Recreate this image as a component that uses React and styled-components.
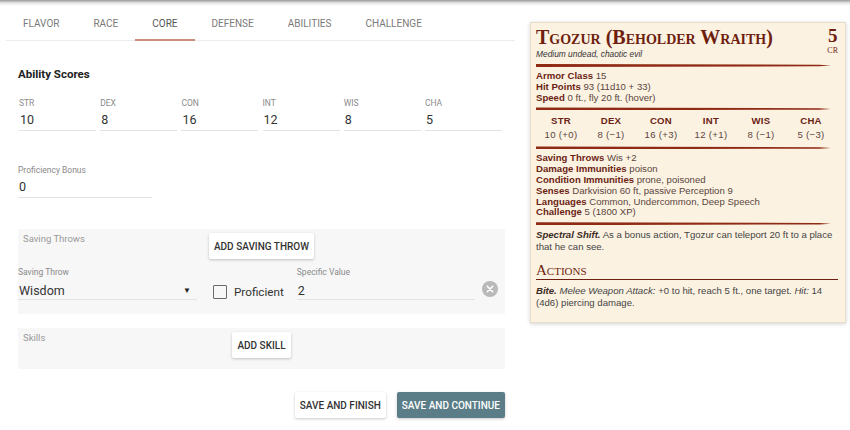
import React from 'react';
import styled, { createGlobalStyle } from 'styled-components';

const tabs = ['FLAVOR', 'RACE', 'CORE', 'DEFENSE', 'ABILITIES', 'CHALLENGE'];

const scores = [
    { name: 'STR', value: 10, mod: '+0' },
    { name: 'DEX', value: 8, mod: '−1' },
    { name: 'CON', value: 16, mod: '+3' },
    { name: 'INT', value: 12, mod: '+1' },
    { name: 'WIS', value: 8, mod: '−1' },
    { name: 'CHA', value: 5, mod: '−3' },
];

const App = () => {
    return (
        <>
            <GlobalStyle />
            <TopShade />
            <Page>
                <Editor>
                    <TabBar>
                        {tabs.map((t) => (
                            <Tab key={t} active={t === 'CORE'}>{t}</Tab>
                        ))}
                    </TabBar>
                    <Content>
                        <Heading>Ability Scores</Heading>
                        <ScoreGrid>
                            {scores.map((s) => (
                                <Field key={s.name}>
                                    <Label>{s.name}</Label>
                                    <Value>{s.value}</Value>
                                </Field>
                            ))}
                        </ScoreGrid>
                        <Field width="134px" top="34px">
                            <Label>Proficiency Bonus</Label>
                            <Value>0</Value>
                        </Field>

                        <GrayBox top="31px" height="85px">
                            <BoxHead>
                                <BoxLabel>Saving Throws</BoxLabel>
                                <Button>ADD SAVING THROW</Button>
                            </BoxHead>
                            <ThrowRow>
                                <Field width="179px">
                                    <Label>Saving Throw</Label>
                                    <Value tall>
                                        Wisdom
                                        <Arrow>▼</Arrow>
                                    </Value>
                                </Field>
                                <Check>
                                    <Box />
                                    Proficient
                                </Check>
                                <Field width="178px">
                                    <Label>Specific Value</Label>
                                    <Value tall>2</Value>
                                </Field>
                                <Clear>
                                    <svg width="16" height="16" viewBox="0 0 16 16">
                                        <circle cx="8" cy="8" r="8" fill="#b9b9b9" />
                                        <path d="M5.3 5.3 L10.7 10.7 M10.7 5.3 L5.3 10.7" stroke="#fff" strokeWidth="1.6" strokeLinecap="round" />
                                    </svg>
                                </Clear>
                            </ThrowRow>
                        </GrayBox>

                        <GrayBox top="14px" height="41px">
                            <BoxHead>
                                <BoxLabel>Skills</BoxLabel>
                                <Button>ADD SKILL</Button>
                            </BoxHead>
                        </GrayBox>

                        <Actions>
                            <Button>SAVE AND FINISH</Button>
                            <Button primary>SAVE AND CONTINUE</Button>
                        </Actions>
                    </Content>
                </Editor>

                <StatBlock>
                    <TitleRow>
                        <div>
                            <Title>Tgozur (Beholder Wraith)</Title>
                            <Subtitle>Medium undead, chaotic evil</Subtitle>
                        </div>
                        <Cr>
                            <CrNum>5</CrNum>
                            <CrLabel>CR</CrLabel>
                        </Cr>
                    </TitleRow>
                    <Rule />
                    <Props>
                        <p><b>Armor Class</b> 15</p>
                        <p><b>Hit Points</b> 93 (11d10 + 33)</p>
                        <p><b>Speed</b> 0 ft., fly 20 ft. (hover)</p>
                    </Props>
                    <Rule />
                    <AbilityTable>
                        {scores.map((s) => (
                            <AbilityCell key={s.name}>
                                <b>{s.name}</b>
                                <span>{s.value} ({s.mod})</span>
                            </AbilityCell>
                        ))}
                    </AbilityTable>
                    <Rule />
                    <Props>
                        <p><b>Saving Throws</b> Wis +2</p>
                        <p><b>Damage Immunities</b> poison</p>
                        <p><b>Condition Immunities</b> prone, poisoned</p>
                        <p><b>Senses</b> Darkvision 60 ft, passive Perception 9</p>
                        <p><b>Languages</b> Common, Undercommon, Deep Speech</p>
                        <p><b>Challenge</b> 5 (1800 XP)</p>
                    </Props>
                    <Rule />
                    <Trait>
                        <b><i>Spectral Shift.</i></b> As a bonus action, Tgozur can teleport 20 ft to a place
                        <br />
                        that he can see.
                    </Trait>
                    <SectionTitle>Actions</SectionTitle>
                    <Trait gap="5px">
                        <b><i>Bite.</i></b> <i>Melee Weapon Attack:</i> +0 to hit, reach 5 ft., one target. <i>Hit:</i> 14
                        <br />
                        (4d6) piercing damage.
                    </Trait>
                </StatBlock>
            </Page>
        </>
    );
};

export default App;


const GlobalStyle = createGlobalStyle`
    body {
        margin: 0;
        background: #fff;
        font-family: Roboto, "Liberation Sans", sans-serif;
        width: 850px;
        height: 430px;
        overflow: hidden;
    }
    p {
        margin: 0;
    }
`;
const TopShade = styled.div`
    height: 6px;
    background: linear-gradient(#9a9a9a, #e6e6e6 50%, #fff);
`;
const Page = styled.div`
    display: flex;
    align-items: flex-start;
`;
const Editor = styled.div`
    width: 509px;
    margin-left: 6px;
`;
const TabBar = styled.div`
    display: flex;
    height: 34px;
    border-bottom: 1px solid #ececec;
`;
const Tab = styled.div`
    padding: 0 17px;
    display: flex;
    align-items: center;
    padding-top: 1px;
    font-size: 10px;
    color: ${(p) => (p.active ? '#555' : '#7a7a7a')};
    border-bottom: 2px solid ${(p) => (p.active ? '#c98f77' : 'transparent')};
    margin-bottom: -1px;
`;
const Content = styled.div`
    padding: 0 10px 0 12px;
`;
const Heading = styled.div`
    margin-top: 26px;
    font-size: 11.5px;
    font-weight: 700;
    color: #222;
`;
const ScoreGrid = styled.div`
    display: grid;
    grid-template-columns: repeat(6, 77px);
    column-gap: 4.2px;
    margin-top: 17px;
    padding-left: 1px;
`;
const Field = styled.div`
    width: ${(p) => p.width || 'auto'};
    margin-top: ${(p) => p.top || '0'};
    border-bottom: 1px solid #e3e3e3;
`;
const Label = styled.div`
    font-size: 8.5px;
    color: #8a8a8a;
    line-height: 11px;
`;
const Value = styled.div`
    display: flex;
    align-items: center;
    justify-content: space-between;
    font-size: 12.5px;
    color: #333;
    height: 21px;
    padding: ${(p) => (p.tall ? '3px 0 0 1px' : '0 0 0 1px')};
    box-sizing: border-box;
`;
const Arrow = styled.span`
    font-size: 8px;
    color: #222;
    margin-right: 6px;
`;
const GrayBox = styled.div`
    margin-top: ${(p) => p.top};
    height: ${(p) => p.height};
    background: #f7f7f7;
`;
const BoxHead = styled.div`
    display: grid;
    grid-template-columns: 1fr auto 1fr;
    align-items: start;
    padding: 4px 5px 0;
`;
const BoxLabel = styled.div`
    font-size: 9.5px;
    color: #999;
`;
const Button = styled.button`
    grid-column: 2;
    height: 26px;
    padding: 0 5px;
    border: none;
    border-radius: 2px;
    font-family: Roboto, sans-serif;
    font-size: 10px;
    font-weight: 500;
    color: ${(p) => (p.primary ? '#fff' : '#333')};
    background: ${(p) => (p.primary ? '#5b7d87' : '#fff')};
    box-shadow: 0 1px 3px rgba(0, 0, 0, 0.22);
`;
const ThrowRow = styled.div`
    display: flex;
    align-items: flex-end;
    margin-top: 8px;
`;
const Check = styled.div`
    display: flex;
    align-items: center;
    gap: 7px;
    margin: 0 13px 0 16px;
    padding-bottom: 1px;
    font-size: 11.7px;
    color: #333;
`;
const Box = styled.div`
    box-sizing: border-box;
    width: 14px;
    height: 14px;
    border: 1.6px solid #6a6a6a;
    border-radius: 1px;
`;
const Clear = styled.div`
    display: flex;
    margin-left: 7px;
    padding-bottom: 3px;
`;
const Actions = styled.div`
    display: flex;
    justify-content: flex-end;
    gap: 11px;
    margin-top: 23px;
`;
const StatBlock = styled.div`
    width: 302px;
    margin: 16px 0 0 15px;
    padding: 3px 7px 13px 5px;
    background: #fcf2e2;
    border: 1px solid #e8dccb;
    box-shadow: 0 1px 4px rgba(0, 0, 0, 0.18);
    font-family: "Liberation Sans", Arial, sans-serif;
    color: #5a463e;
`;
const TitleRow = styled.div`
    display: flex;
    justify-content: space-between;
`;
const Title = styled.div`
    font-family: "Liberation Serif", serif;
    font-variant: small-caps;
    font-weight: 700;
    font-size: 20px;
    line-height: 22px;
    color: #6e1f0f;
`;
const Subtitle = styled.div`
    font-size: 8.4px;
    line-height: 11px;
    font-style: italic;
    color: #333;
    margin-top: 1px;
`;
const Cr = styled.div`
    display: flex;
    flex-direction: column;
    align-items: center;
    font-family: "Liberation Serif", serif;
    color: #6e1f0f;
`;
const CrNum = styled.div`
    font-size: 19px;
    font-weight: 700;
    line-height: 20px;
`;
const CrLabel = styled.div`
    font-size: 8px;
    line-height: 9px;
`;
const Rule = styled.div`
    height: 3px;
    width: 295px;
    margin: 4px 0;
    background: #8f2a14;
    clip-path: polygon(0 0, 96% 25%, 100% 50%, 96% 75%, 0 100%);
`;
const Props = styled.div`
    font-size: 9.6px;
    line-height: 10.8px;
    b {
        color: #6b2414;
    }
`;
const AbilityTable = styled.div`
    display: grid;
    grid-template-columns: repeat(6, 50px);
`;
const AbilityCell = styled.div`
    display: flex;
    flex-direction: column;
    align-items: center;
    font-size: 9.6px;
    line-height: 14px;
    letter-spacing: 0.3px;
    b {
        color: #6b2414;
    }
`;
const Trait = styled.div`
    font-size: 9.6px;
    line-height: 12px;
    color: #444;
    white-space: nowrap;
    margin-top: ${(p) => p.gap || '2px'};
    b {
        color: #3a2a24;
    }
`;
const SectionTitle = styled.div`
    margin-top: 9px;
    font-family: "Liberation Serif", serif;
    font-variant: small-caps;
    font-size: 15px;
    line-height: 17px;
    color: #6e1f0f;
    border-bottom: 1px solid #6e1f0f;
`;
